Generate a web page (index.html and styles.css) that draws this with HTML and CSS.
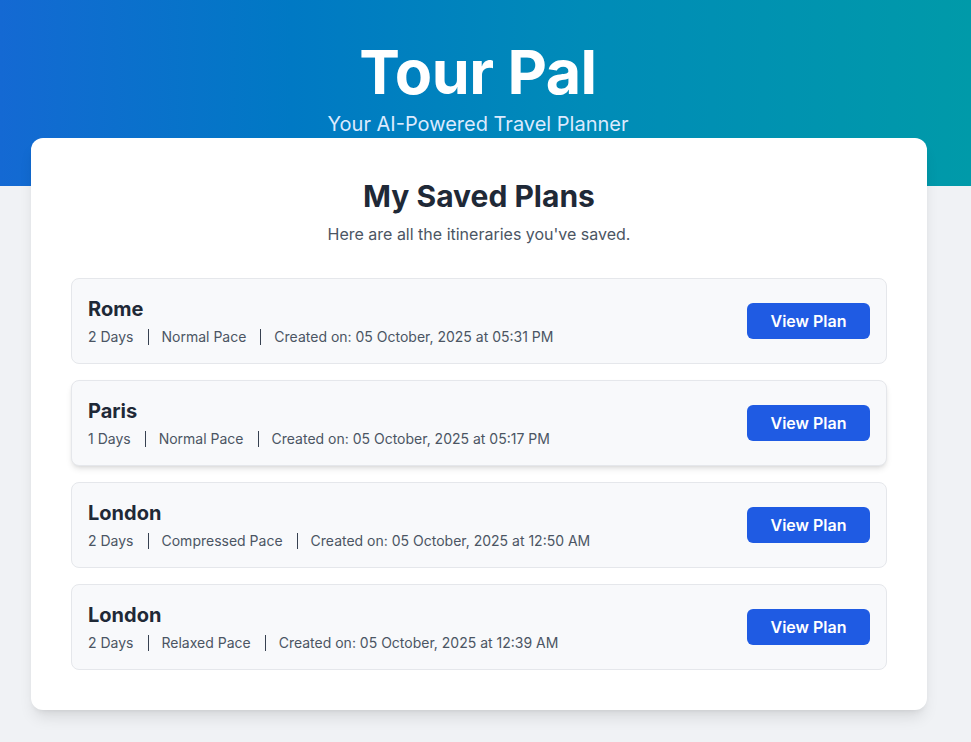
FILE: index.html
```html
<!DOCTYPE html>
<html lang="en">
<head>
<meta charset="utf-8">
<title>Tour Pal</title>
<link rel="stylesheet" href="styles.css">
</head>
<body>
<header class="hero">
  <div class="hero-inner">
    <h1 class="hero-title">Tour Pal</h1>
    <p class="hero-sub">Your AI-Powered Travel Planner</p>
  </div>
</header>
<div class="page">
<main class="panel">
  <h2 class="panel-title">My Saved Plans</h2>
  <p class="panel-sub">Here are all the itineraries you've saved.</p>
  <ul class="plans">
    <li class="plan">
      <div class="plan-info">
        <h3 class="plan-city">Rome</h3>
        <div class="plan-meta"><span>2 Days</span><span class="sep"></span><span>Normal Pace</span><span class="sep"></span><span>Created on: 05 October, 2025 at 05:31 PM</span></div>
      </div>
      <button class="btn">View Plan</button>
    </li>
    <li class="plan plan-hover">
      <div class="plan-info">
        <h3 class="plan-city">Paris</h3>
        <div class="plan-meta"><span>1 Days</span><span class="sep"></span><span>Normal Pace</span><span class="sep"></span><span>Created on: 05 October, 2025 at 05:17 PM</span></div>
      </div>
      <button class="btn">View Plan</button>
    </li>
    <li class="plan">
      <div class="plan-info">
        <h3 class="plan-city">London</h3>
        <div class="plan-meta"><span>2 Days</span><span class="sep"></span><span>Compressed Pace</span><span class="sep"></span><span>Created on: 05 October, 2025 at 12:50 AM</span></div>
      </div>
      <button class="btn">View Plan</button>
    </li>
    <li class="plan">
      <div class="plan-info">
        <h3 class="plan-city">London</h3>
        <div class="plan-meta"><span>2 Days</span><span class="sep"></span><span>Relaxed Pace</span><span class="sep"></span><span>Created on: 05 October, 2025 at 12:39 AM</span></div>
      </div>
      <button class="btn">View Plan</button>
    </li>
  </ul>
</main>
</div>
</body>
</html>
```
FILE: styles.css
```css
* { box-sizing: border-box; }
html, body { margin: 0; padding: 0; }
body {
  font-family: Inter, "Noto Sans", sans-serif;
  background: #f0f2f5;
  color: #1f2937;
}
.hero {
  height: 186px;
  background: linear-gradient(90deg, #1469d3 0%, #0079c4 30%, #008bb8 60%, #009aa9 100%);
  color: #fff;
}
.hero-inner {
  width: 956px;
  text-align: center;
  padding-top: 37px;
}
.hero-title {
  margin: 0;
  font-size: 61px;
  line-height: 70px;
  font-weight: 700;
  letter-spacing: -0.5px;
}
.hero-sub {
  margin: 3px 0 0;
  font-size: 20px;
  line-height: 28px;
  color: #dbeafe;
}
.page {
  width: 956px;
  padding: 0 29px 32px 31px;
}
.panel {
  margin-top: -48px;
  background: #fff;
  border-radius: 12px;
  box-shadow: 0 10px 15px -3px rgba(0,0,0,0.1), 0 4px 6px -4px rgba(0,0,0,0.1);
  padding: 40px;
}
.panel-title {
  margin: 0;
  text-align: center;
  font-size: 30px;
  line-height: 36px;
  font-weight: 700;
  color: #1f2937;
}
.panel-sub {
  margin: 8px 0 0;
  text-align: center;
  font-size: 16px;
  line-height: 24px;
  color: #4b5563;
}
.plans {
  list-style: none;
  margin: 32px 0 0;
  padding: 0;
  display: flex;
  flex-direction: column;
  gap: 16px;
}
.plan {
  display: flex;
  align-items: center;
  justify-content: space-between;
  background: #f8f9fb;
  border: 1px solid #e5e7eb;
  border-radius: 8px;
  padding: 16px;
}
.plan-hover {
  box-shadow: 0 4px 6px -1px rgba(0,0,0,0.1), 0 2px 4px -2px rgba(0,0,0,0.1);
}
.plan-city {
  margin: 0;
  font-size: 20px;
  line-height: 28px;
  font-weight: 700;
  color: #1f2937;
}
.plan-meta {
  margin-top: 4px;
  display: flex;
  align-items: center;
  font-size: 14px;
  line-height: 20px;
  color: #4b5563;
}
.sep {
  width: 1px;
  height: 16px;
  background: #374151;
  margin: 0 13px 0 14px;
}
.btn {
  font-family: inherit;
  font-size: 16px;
  line-height: 24px;
  font-weight: 600;
  color: #fff;
  background: #1f5be3;
  border: none;
  border-radius: 6px;
  padding: 6px 0;
  width: 123px;
  white-space: nowrap;
}
```
